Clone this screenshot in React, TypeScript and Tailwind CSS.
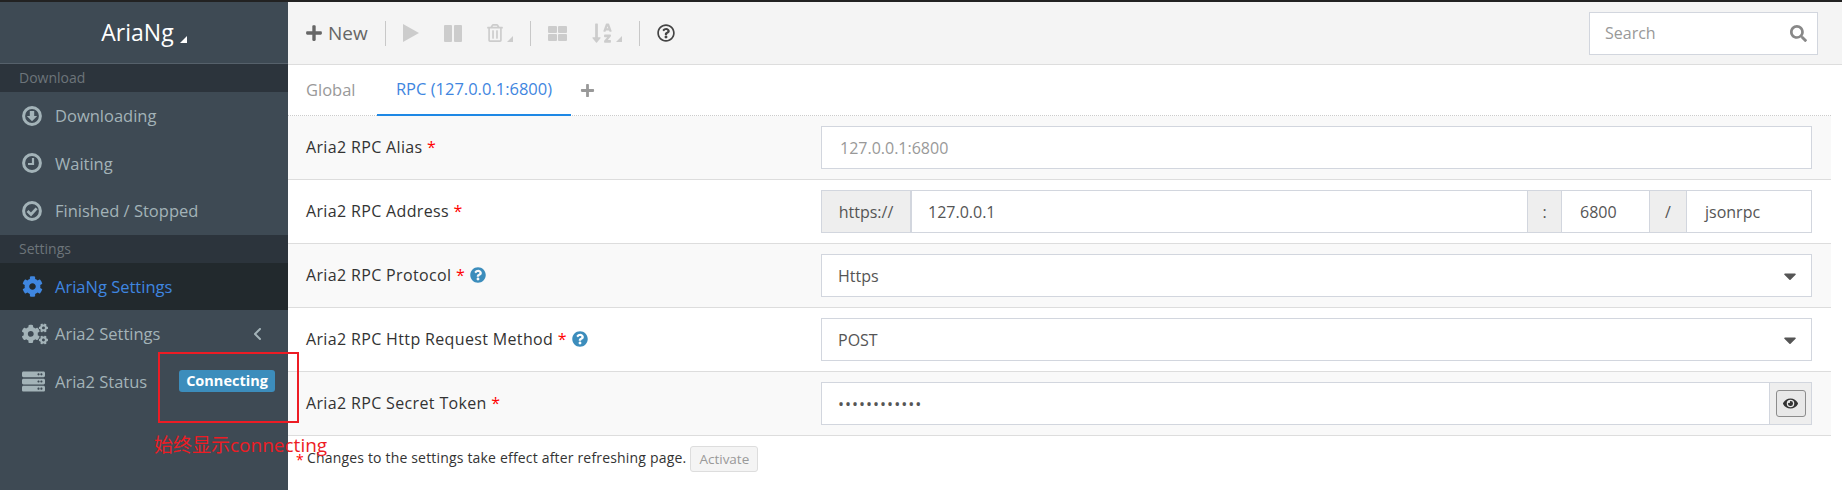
import { ReactNode } from "react";
import {
  FaCaretDown,
  FaCog,
  FaCogs,
  FaEye,
  FaPlus,
  FaQuestionCircle,
  FaRegQuestionCircle,
  FaRegTrashAlt,
  FaSearch,
  FaServer,
  FaSortAlphaDown,
} from "react-icons/fa";
import { FaAngleLeft } from "react-icons/fa6";

function Corner({ className }: { className: string }) {
  return (
    <svg viewBox="0 0 7 7" className={className}>
      <path d="M7 0V7H0Z" fill="currentColor" />
    </svg>
  );
}

// fontawesome 4 "-o" circle icons, the package only has thinner ones
function CircleIcon({ children }: { children: ReactNode }) {
  return (
    <svg viewBox="0 0 20 20" className="h-5 w-5" fill="none" stroke="currentColor">
      <circle cx="10" cy="10" r="8.4" strokeWidth="3" />
      {children}
    </svg>
  );
}

function SideHeader({ children }: { children: ReactNode }) {
  return (
    <div className="h-7 bg-[#2c343c] pl-[19px] text-[14px] leading-[28px] text-[#6d747a]">
      {children}
    </div>
  );
}

function SideItem({
  icon,
  label,
  active,
  right,
}: {
  icon: ReactNode;
  label: string;
  active?: boolean;
  right?: ReactNode;
}) {
  return (
    <div
      className={`flex h-[47.5px] items-center pl-[22px] text-[16.5px] ${
        active ? "bg-[#22292d] text-[#3f86e0]" : "text-[#a3b3b8]"
      }`}
    >
      <span className="flex w-[33px] flex-none text-[21px]">{icon}</span>
      <span className="pt-[2px]">{label}</span>
      {right}
    </div>
  );
}

function Sep() {
  return <div className="mx-[17px] h-[25px] w-px flex-none bg-[#c8c8c8]" />;
}

function Req() {
  return <span className="text-[#f00]"> *</span>;
}

function Row({
  label,
  help,
  odd,
  children,
}: {
  label: string;
  help?: boolean;
  odd?: boolean;
  children: ReactNode;
}) {
  return (
    <div
      className={`flex h-[64px] items-center border-b border-[#dddddd] pl-[18px] ${
        odd ? "bg-[#f9f9f9]" : "bg-white"
      }`}
    >
      <div className="flex w-[515px] items-center gap-[5px] pb-[1px] text-[16px] tracking-[0.35px] text-[#333]">
        <span>
          {label}
          <Req />
        </span>
        {help && <FaQuestionCircle className="text-[16px] text-[#3c8dbc]" />}
      </div>
      <div className="flex h-[43px] w-[991px]">{children}</div>
    </div>
  );
}

function Field({
  text,
  muted,
  pad = "px-[18px]",
  className = "",
}: {
  text: string;
  muted?: boolean;
  pad?: string;
  className?: string;
}) {
  return (
    <div
      className={`flex flex-1 items-center border border-[#d2d6de] bg-white text-[16px] ${pad} ${
        muted ? "text-[#999]" : "text-[#555]"
      } ${className}`}
    >
      {text}
    </div>
  );
}

function Select({ text }: { text: string }) {
  return (
    <div className="flex flex-1 items-center justify-between border border-[#d2d6de] bg-white pl-[16px] pr-[11px] text-[16px] text-[#555]">
      {text}
      <FaCaretDown className="text-[20px] text-[#555]" />
    </div>
  );
}

function Addon({ text, className }: { text: string; className: string }) {
  return (
    <div
      className={`-ml-px flex h-[43px] items-center justify-center border border-[#d2d6de] bg-[#eeeeee] text-[16px] text-[#555] ${className}`}
    >
      {text}
    </div>
  );
}

export default function App() {
  return (
    <div className="relative flex h-[490px] w-[1842px] flex-col overflow-hidden bg-white font-['Open_Sans',sans-serif]">
      <div className="h-[2px] bg-[#222222]" />
      <div className="flex flex-1">
        <aside className="w-[288px] bg-[#3e4a54]">
          <div className="flex h-[62px] items-center justify-center border-b border-[#56616b] text-[23px] text-white">
            AriaNg
            <Corner className="ml-[6px] mt-[14px] h-[7px] w-[7px] text-white" />
          </div>
          <SideHeader>Download</SideHeader>
          <SideItem
            icon={
              <CircleIcon>
                <path d="M10 15.2 4.8 10H7.8V5H12.2V10H15.2Z" fill="currentColor" stroke="none" />
              </CircleIcon>
            }
            label="Downloading"
          />
          <SideItem
            icon={
              <CircleIcon>
                <path d="M11 5V11H6" strokeWidth="2.2" />
              </CircleIcon>
            }
            label="Waiting"
          />
          <SideItem
            icon={
              <CircleIcon>
                <path d="M5.5 10 9 13.4 14.6 7.4" strokeWidth="2.8" />
              </CircleIcon>
            }
            label="Finished / Stopped"
          />
          <SideHeader>Settings</SideHeader>
          <SideItem icon={<FaCog />} label="AriaNg Settings" active />
          <SideItem
            icon={<FaCogs className="text-[26px]" />}
            label="Aria2 Settings"
            right={<FaAngleLeft className="ml-auto mr-[22px] text-[16px]" />}
          />
          <SideItem
            icon={<FaServer className="text-[23px]" />}
            label="Aria2 Status"
            right={
              <span className="ml-auto mr-[13px] flex h-[22px] w-[96px] items-center justify-center rounded-[3px] bg-[#3c8dbc] text-[14.5px] font-bold text-white">
                Connecting
              </span>
            }
          />
        </aside>

        <main className="flex-1">
          <div className="flex h-[63px] items-center border-b border-[#dddddd] bg-[#f4f4f4] pl-[17px] pr-[24px] text-[#cccccc]">
            <FaPlus className="text-[18px] text-[#666]" />
            <span className="ml-[5px] text-[19px] text-[#666]">New</span>
            <Sep />
            <svg viewBox="0 0 16 18" className="h-[18px] w-[16px] flex-none">
              <path d="M0 0 16 9 0 18Z" fill="currentColor" />
            </svg>
            <svg viewBox="0 0 18 17" className="ml-[25px] h-[17px] w-[18px] flex-none">
              <path d="M0 1a1 1 0 0 1 1-1H7a1 1 0 0 1 1 1V16a1 1 0 0 1-1 1H1a1 1 0 0 1-1-1ZM10 1a1 1 0 0 1 1-1H17a1 1 0 0 1 1 1V16a1 1 0 0 1-1 1H11a1 1 0 0 1-1-1Z" fill="currentColor" />
            </svg>
            <FaRegTrashAlt className="ml-[24px] flex-none text-[18px]" />
            <Corner className="ml-[3px] mt-[12px] h-[6px] w-[6px] flex-none text-[#ccc]" />
            <Sep />
            <svg viewBox="0 0 19 15" className="h-[15px] w-[19px] flex-none">
              <path d="M0 1a1 1 0 0 1 1-1H8a1 1 0 0 1 1 1V6a1 1 0 0 1-1 1H1a1 1 0 0 1-1-1ZM10 1a1 1 0 0 1 1-1H18a1 1 0 0 1 1 1V6a1 1 0 0 1-1 1H11a1 1 0 0 1-1-1ZM0 9a1 1 0 0 1 1-1H8a1 1 0 0 1 1 1V14a1 1 0 0 1-1 1H1a1 1 0 0 1-1-1ZM10 9a1 1 0 0 1 1-1H18a1 1 0 0 1 1 1V14a1 1 0 0 1-1 1H11a1 1 0 0 1-1-1Z" fill="currentColor" />
            </svg>
            <FaSortAlphaDown className="ml-[24px] flex-none text-[22px]" />
            <Corner className="ml-[3px] mt-[12px] h-[6px] w-[6px] flex-none text-[#ccc]" />
            <Sep />
            <FaRegQuestionCircle className="flex-none text-[18px] text-[#444]" />
            <div className="ml-auto flex h-[43px] w-[229px] items-center justify-between border border-[#d2d6de] bg-white pl-[15px] pr-[10px] text-[16px] text-[#999]">
              Search
              <FaSearch className="text-[17px] text-[#888]" />
            </div>
          </div>

          <div className="mr-[11px]">
            <div className="flex h-[51px] border-b border-dotted border-[#cccccc] text-[16.5px]">
              <div className="flex w-[89px] items-center pl-[18px] text-[#999]">Global</div>
              <div className="-mb-px flex w-[194px] items-center justify-center border-b-[2px] border-[#1e88e5] text-[#3f86e0]">
                RPC (127.0.0.1:6800)
              </div>
              <div className="flex items-center pl-[9px] text-[#999]">
                <FaPlus className="text-[15px]" />
              </div>
            </div>

            <Row label="Aria2 RPC Alias" odd>
              <Field text="127.0.0.1:6800" muted />
            </Row>
            <Row label="Aria2 RPC Address">
              <Addon text="https://" className="ml-0 w-[90px]" />
              <Field text="127.0.0.1" pad="px-[16px]" />
              <Addon text=":" className="w-[35px]" />
              <div className="-ml-px flex w-[89px]">
                <Field text="6800" />
              </div>
              <Addon text="/" className="w-[38px]" />
              <div className="-ml-px flex w-[126px]">
                <Field text="jsonrpc" />
              </div>
            </Row>
            <Row label="Aria2 RPC Protocol" help odd>
              <Select text="Https" />
            </Row>
            <Row label="Aria2 RPC Http Request Method" help>
              <Select text="POST" />
            </Row>
            <Row label="Aria2 RPC Secret Token" odd>
              <Field text="••••••••••••" pad="px-[16px]" className="tracking-[1px]" />
              <div className="-ml-px flex h-[43px] w-[43px] items-center justify-center border border-[#d2d6de] bg-[#eeeeee]">
                <div className="flex h-[27px] w-[30px] items-center justify-center rounded-[3px] border border-[#8c8c8c] bg-[#e8e8e8] text-[15px] text-[#333]">
                  <FaEye />
                </div>
              </div>
            </Row>

            <div className="flex items-center pl-[8px] pt-[10px] text-[14px] tracking-[0.18px] text-[#333]">
              <span className="text-[#f00]">*</span>
              <span className="ml-[3px] pb-[3px]">Changes to the settings take effect after refreshing page.</span>
              <span className="ml-[4px] flex h-[26px] w-[68px] items-center justify-center rounded-[3px] border border-[#dddddd] bg-[#f4f4f4] text-[13.5px] tracking-normal text-[#999]">
                Activate
              </span>
            </div>
          </div>
        </main>
      </div>

      {/* red annotation drawn over the screenshot */}
      <div className="absolute left-[158px] top-[352px] h-[71px] w-[141px] border-2 border-[#ed1c24]" />
      <div className="absolute left-[154px] top-[432px] font-['Open_Sans','Noto_Sans_CJK_SC',sans-serif] text-[19px] leading-[26px] text-[#ed1c24]">
        始终显示connecting
      </div>
    </div>
  );
}
